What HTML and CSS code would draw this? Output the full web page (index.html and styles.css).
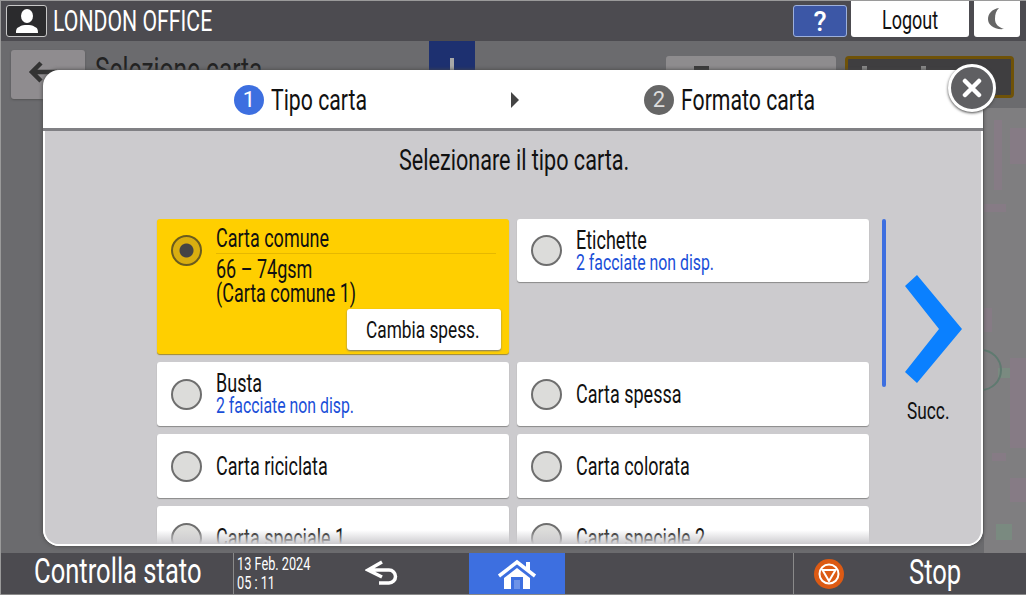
FILE: index.html
```html
<!DOCTYPE html>
<html lang="it">
<head>
<meta charset="UTF-8">
<title>Selezione carta</title>
<link rel="stylesheet" href="styles.css">
</head>
<body>
<div class="page">
    <header class="top-bar">
        <div class="user-box">
            <svg width="30" height="26" viewBox="0 0 30 26"><ellipse cx="15" cy="8" rx="6" ry="7" fill="#fff"/><path d="M4 25c0-2 0-5 3-6 3-2 5-2 8-2s5 0 8 2c3 1 3 4 3 6z" fill="#fff"/></svg>
        </div>
        <span class="office cond">LONDON OFFICE</span>
        <div class="top-right">
            <button class="help-btn">?</button>
            <button class="logout-btn"><span class="cond">Logout</span></button>
            <button class="moon-btn">
                <svg width="20" height="24" viewBox="0 0 20 24"><path d="M12 1C5 2 1 7 1 12c0 6 6 11 16 10-6-2-9-5-9-10 0-5 1-8 4-11z" fill="#666"/></svg>
            </button>
        </div>
    </header>

    <div class="content">
        <div class="back-btn">
            <svg width="30" height="24" viewBox="0 0 30 24"><path d="M30 12H5M14 3l-9 9 9 9" fill="none" stroke="#333" stroke-width="4.500"/></svg>
        </div>
        <div class="page-title cond">Selezione carta</div>
        <div class="info-tab"></div>
        <div class="ghost-btn"></div>
        <div class="ghost-confirm"></div>
        <div class="side-panel">
            <!-- faint blocks of the page behind the dialog -->
            <svg width="42" height="446" viewBox="0 0 42 446">
                <g fill="#867b85">
                    <rect x="10" y="12" width="8" height="70"/>
                    <rect x="26" y="20" width="16" height="36"/>
                    <rect x="0" y="96" width="22" height="8"/>
                    <rect x="0" y="200" width="8" height="24"/>
                    <rect x="26" y="250" width="16" height="90"/>
                    <rect x="8" y="345" width="14" height="8"/>
                    <rect x="26" y="370" width="16" height="24"/>
                </g>
                <g fill="#7a8a80">
                    <rect x="14" y="260" width="12" height="10"/>
                    <rect x="12" y="416" width="16" height="16"/>
                </g>
            </svg>
        </div>
        <div class="ghost-ring"></div>

        <div class="modal">
            <div class="steps">
                <div class="step">
                    <span class="step-num step-on">1</span>
                    <span class="step-text cond">Tipo carta</span>
                </div>
                <span class="step-arrow"></span>
                <div class="step">
                    <span class="step-num">2</span>
                    <span class="step-text cond">Formato carta</span>
                </div>
            </div>
            <div class="modal-body">
                <p class="prompt"><span class="cond">Selezionare il tipo carta.</span></p>
                <div class="picker">
                    <div class="paper-grid">
                        <div class="paper-card selected tall">
                            <span class="radio"></span>
                            <div class="paper-text">
                                <div class="paper-name rule"><span class="cond">Carta comune</span></div>
                                <div class="paper-name"><span class="cond">66 – 74gsm</span></div>
                                <div class="paper-name"><span class="cond">(Carta comune 1)</span></div>
                            </div>
                            <button class="spess-btn"><span class="cond">Cambia spess.</span></button>
                        </div>
                        <div class="paper-card short">
                            <span class="radio"></span>
                            <div class="paper-text">
                                <div class="paper-name"><span class="cond">Etichette</span></div>
                                <div class="paper-note"><span class="cond">2 facciate non disp.</span></div>
                            </div>
                        </div>
                        <div class="paper-card">
                            <span class="radio"></span>
                            <div class="paper-text">
                                <div class="paper-name"><span class="cond">Busta</span></div>
                                <div class="paper-note"><span class="cond">2 facciate non disp.</span></div>
                            </div>
                        </div>
                        <div class="paper-card">
                            <span class="radio"></span>
                            <div class="paper-text"><div class="paper-name single"><span class="cond">Carta spessa</span></div></div>
                        </div>
                        <div class="paper-card">
                            <span class="radio"></span>
                            <div class="paper-text"><div class="paper-name single"><span class="cond">Carta riciclata</span></div></div>
                        </div>
                        <div class="paper-card">
                            <span class="radio"></span>
                            <div class="paper-text"><div class="paper-name single"><span class="cond">Carta colorata</span></div></div>
                        </div>
                        <div class="paper-card">
                            <span class="radio"></span>
                            <div class="paper-text"><div class="paper-name single"><span class="cond">Carta speciale 1</span></div></div>
                        </div>
                        <div class="paper-card">
                            <span class="radio"></span>
                            <div class="paper-text"><div class="paper-name single"><span class="cond">Carta speciale 2</span></div></div>
                        </div>
                    </div>
                    <div class="scroll-side">
                        <span class="scroll-line"></span>
                        <div class="next-box">
                            <svg width="60" height="110" viewBox="0 0 60 110"><path d="M2 12L14 1 59 55 14 109 2 98 36 55z" fill="#0a80ff"/></svg>
                            <span class="next-label cond">Succ.</span>
                        </div>
                    </div>
                </div>
                <div class="fade"></div>
            </div>
        </div>
        <button class="close-btn">
            <svg width="20" height="20" viewBox="0 0 20 20"><path d="M3 3l14 14M17 3L3 17" stroke="#fff" stroke-width="4.500" stroke-linecap="round"/></svg>
        </button>
    </div>

    <footer class="bottom-bar">
        <div class="status-cell"><span class="cond">Controlla stato</span></div>
        <div class="clock">
            <span class="cond">13 Feb. 2024</span>
            <span class="cond">05 : 11</span>
        </div>
        <div class="back-cell">
            <svg width="34" height="26" viewBox="0 0 34 26"><path d="M17 2L3 10l14 7M4 10h20a6.500 6.500 0 0 1 0 13H14" fill="none" stroke="#fff" stroke-width="3.500"/></svg>
        </div>
        <div class="home-cell">
            <svg width="40" height="30" viewBox="0 0 40 30"><path d="M2 17L20 3l18 14" fill="none" stroke="#fff" stroke-width="3.500"/><path d="M29 3h4v9h-4z" fill="#fff"/><path d="M7 19L20 9l13 10v11H7z" fill="#fff"/><path d="M14 18h12v12H14z" fill="#3d6fe0"/><path d="M17 21h6v9h-6z" fill="#fff" opacity=".25"/></svg>
        </div>
        <div class="stop-cell">
            <svg width="32" height="32" viewBox="0 0 32 32"><circle cx="16" cy="16" r="15" fill="#dc5a14"/><circle cx="16" cy="16" r="9.500" fill="none" stroke="#fff" stroke-width="2"/><path d="M9.500 12h13L16 23z" fill="none" stroke="#fff" stroke-width="2"/></svg>
            <span class="stop-label cond">Stop</span>
        </div>
    </footer>
</div>
</body>
</html>
```

FILE: styles.css
```css
* {
    box-sizing: border-box;
}

html, body {
    margin: 0;
    height: 100%;
    overflow: hidden;
}

body {
    font-family: "Roboto", "Liberation Sans", sans-serif;
    color: #111;
}

button {
    font-family: inherit;
    padding: 0;
    border: none;
}

/* narrow panel type, no condensed family here so it gets squeezed */
.cond {
    display: inline-block;
    transform: scaleX(0.72);
    transform-origin: left center;
    white-space: nowrap;
}

.page {
    width: 1026px;
    height: 595px;
    display: flex;
    flex-direction: column;
    background: #6b6b6e;
}

.top-bar {
    height: 41px;
    flex: none;
    display: flex;
    align-items: center;
    padding: 0 0 0 6px;
    background: #4c4b50;
    border-top: 1px solid #9a9a9a;
    box-shadow: inset 1px 0 #9a9a9a;
}

.user-box {
    width: 41px;
    height: 32px;
    display: flex;
    align-items: center;
    justify-content: center;
    background: #2b2b2d;
    border: 1px solid #c8c8c8;
    border-radius: 3px;
}

.office {
    margin-left: 6px;
    color: #fff;
    font-size: 29.500px;
}

.top-right {
    margin-left: auto;
    display: flex;
    gap: 5px;
    padding-right: 6px;
    align-items: flex-start;
    height: 36px;
    align-self: flex-start;
}

.help-btn {
    width: 54px;
    height: 32px;
    margin-top: 4px;
    margin-right: -1px;
    background: #3c57a6;
    border: 1px solid #9db0dc;
    border-radius: 3px;
    color: #fff;
    font-size: 27px;
    font-weight: 500;
}

.logout-btn {
    width: 118px;
    height: 36px;
    padding: 2px 0 0 31px;
    text-align: left;
    background: #fff;
    border-radius: 0 0 3px 3px;
    font-size: 25px;
    color: #111;
}

.moon-btn {
    width: 46px;
    height: 36px;
    background: #fff;
    border-radius: 0 0 3px 3px;
    display: flex;
    align-items: center;
    justify-content: center;
}

.content {
    flex: 1;
    position: relative;
    overflow: hidden;
    box-shadow: inset 1px 0 #9a9a9a;
}

.back-btn {
    position: absolute;
    left: 11px;
    top: 9px;
    width: 74px;
    height: 49px;
    padding: 10px 0 0 16px;
    background: #8f8c8f;
    border-radius: 3px;
    box-shadow: 0 1px 2px #555;
    overflow: hidden;
}

.page-title {
    position: absolute;
    left: 95px;
    top: 8px;
    font-size: 34px;
    color: #222;
}

.info-tab {
    position: absolute;
    left: 429px;
    top: 0;
    width: 46px;
    height: 40px;
    background: #1d3070;
}

.info-tab::after {
    content: "";
    position: absolute;
    left: 21px;
    top: 17px;
    width: 4px;
    height: 12px;
    background: #a8a8a8;
}

.ghost-btn {
    position: absolute;
    left: 666px;
    top: 15px;
    width: 170px;
    height: 30px;
    background: #8e8c8e;
    border-radius: 3px;
}

.ghost-btn::after {
    content: "";
    position: absolute;
    left: 28px;
    top: 10px;
    width: 15px;
    height: 5px;
    background: #3a3a3a;
}

.ghost-confirm {
    position: absolute;
    left: 845px;
    top: 15px;
    width: 169px;
    height: 42px;
    background: #3f3e40;
    border: 3px solid #6f5208;
    border-radius: 4px;
}

.ghost-confirm::before,
.ghost-confirm::after {
    content: "";
    position: absolute;
    top: 7px;
    width: 5px;
    height: 6px;
    background: #8a8a8a;
}

.ghost-confirm::before {
    left: 14px;
}

.ghost-confirm::after {
    left: 73px;
}

.side-panel {
    position: absolute;
    left: 984px;
    top: 67px;
    right: 0;
    bottom: 0;
    background: #7f7e80;
}

.ghost-ring {
    position: absolute;
    left: 960px;
    top: 308px;
    width: 42px;
    height: 42px;
    border: 2px solid #5f7a70;
    border-radius: 50%;
}

.modal {
    position: absolute;
    left: 43px;
    top: 29px;
    width: 940px;
    height: 476px;
    display: flex;
    flex-direction: column;
    background: #fff;
    border-radius: 16px;
    overflow: hidden;
    box-shadow: 0 0 4px #444;
}

.steps {
    height: 61px;
    flex: none;
    display: flex;
    align-items: center;
    border-bottom: 3px solid #808084;
    padding: 2px 0 0 191px;
}

.step {
    display: flex;
    align-items: center;
    gap: 7px;
    width: 277px;
}

.step-num {
    width: 30px;
    height: 30px;
    flex: none;
    border-radius: 50%;
    background: #666;
    color: #ddd;
    font-size: 22px;
    text-align: center;
    line-height: 30px;
}

.step-on {
    background: #3d6fe0;
    color: #fff;
}

.step-text {
    font-size: 29.500px;
}

.step-arrow {
    width: 0;
    height: 0;
    margin-right: 125px;
    border-left: 8px solid #444;
    border-top: 8px solid transparent;
    border-bottom: 8px solid transparent;
}

.modal-body {
    flex: 1;
    position: relative;
    background: #cccbce;
    border: 2px solid #fff;
    border-top: none;
    border-radius: 0 0 16px 16px;
    overflow: hidden;
}

.prompt {
    margin: 0;
    padding-left: 354px;
    height: 88px;
    padding-top: 13px;
    font-size: 30px;
    line-height: 32px;
}

.picker {
    display: flex;
    padding-left: 112px;
}

.paper-grid {
    width: 712px;
    display: grid;
    grid-template-columns: 352px 352px;
    grid-template-rows: 63px 64px;
    grid-auto-rows: 64px;
    column-gap: 8px;
    row-gap: 8px;
}

.paper-card {
    position: relative;
    display: flex;
    align-items: center;
    padding-left: 14px;
    background: #fff;
    border-radius: 3px;
    box-shadow: 0 1px 1px #8a8a8a;
}

.tall {
    grid-row: span 2;
    align-items: flex-start;
    padding-top: 16px;
    background: #ffcf00;
    box-shadow: 0 1px 1px #a08a30;
}

.short {
    grid-row: span 2;
    align-self: start;
    height: 63px;
}

.radio {
    width: 31px;
    height: 31px;
    flex: none;
    border-radius: 50%;
    background: #dcdcda;
    border: 2px solid #6e6e6e;
}

.selected .radio {
    background: radial-gradient(circle, #444 0 6.500px, #d9ae10 7.500px);
    border-color: #6b5c1e;
}

.paper-text {
    flex: 1;
    margin-left: 14px;
    padding-right: 13px;
}

.tall .paper-text {
    margin-top: -11px;
}

.paper-name {
    font-size: 25px;
    line-height: 24px;
}

.single {
    padding-top: 2px;
}

.rule {
    height: 30px;
    line-height: 30px;
    border-bottom: 1px solid #e6b800;
    margin-bottom: 4px;
}

.paper-note {
    font-size: 22px;
    line-height: 20px;
    color: #1a4fd8;
}

.spess-btn {
    position: absolute;
    right: 8px;
    bottom: 4px;
    width: 154px;
    height: 41px;
    background: #fff;
    border-radius: 3px;
    box-shadow: 0 1px 2px #777;
    font-size: 24px;
    color: #111;
    text-align: left;
    padding-left: 19px;
}

.scroll-side {
    display: flex;
    padding-left: 13px;
}

.scroll-line {
    width: 4px;
    height: 168px;
    background: #3d6fe0;
    border-radius: 2px;
}

.next-box {
    display: flex;
    flex-direction: column;
    align-items: flex-start;
    padding: 55px 0 0 17px;
}

.next-label {
    margin: 13px 0 0 4px;
    font-size: 24px;
}

.fade {
    position: absolute;
    left: 0;
    right: 0;
    bottom: 0;
    height: 14px;
    background: linear-gradient(rgba(204, 203, 206, 0), #cccbce);
}

.close-btn {
    position: absolute;
    left: 948px;
    top: 23px;
    width: 48px;
    height: 48px;
    border-radius: 50%;
    border: 3px solid #fff;
    background: #5f5f62;
    box-shadow: 0 1px 3px #444;
    display: flex;
    align-items: center;
    justify-content: center;
}

.bottom-bar {
    height: 42px;
    flex: none;
    display: flex;
    align-items: stretch;
    background: #4c4b50;
    color: #fff;
    box-shadow: inset 1px 0 #9a9a9a, inset 0 -1px #8a8a8a;
}

.status-cell {
    width: 233px;
    padding-left: 34px;
    font-size: 35.500px;
    line-height: 37px;
}

.clock {
    width: 110px;
    padding: 2px 0 0 3px;
    border-left: 1px solid #8a8a8a;
    font-size: 17.700px;
    line-height: 19px;
    display: flex;
    flex-direction: column;
    align-items: flex-start;
}

.back-cell {
    width: 126px;
    padding: 7px 0 0 22px;
}

.home-cell {
    width: 96px;
    background: #3d6fe0;
    display: flex;
    align-items: center;
    justify-content: center;
    margin-bottom: 1px;
}

.stop-cell {
    width: 233px;
    margin-left: auto;
    border-left: 1px solid #8a8a8a;
    display: flex;
    align-items: center;
    padding-left: 19px;
}

.stop-label {
    margin-left: 64px;
    margin-top: -5px;
    font-size: 35.500px;
}
```
